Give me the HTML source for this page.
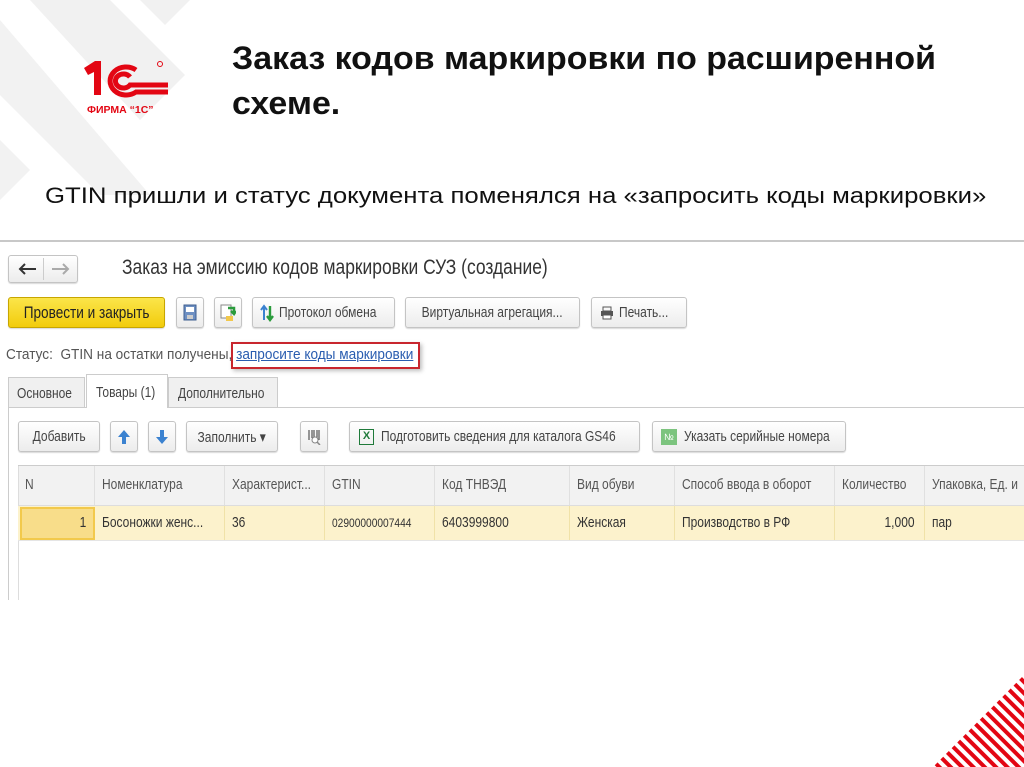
<!DOCTYPE html>
<html><head><meta charset="utf-8">
<style>
*{box-sizing:border-box;margin:0;padding:0}
body{width:1024px;height:767px;position:relative;overflow:hidden;background:#fff;font-family:"Liberation Sans",sans-serif;}
.a{position:absolute}
.n{display:inline-block;transform:scaleX(.8);white-space:nowrap}
.nl{display:inline-block;transform:scaleX(.8);transform-origin:left;white-space:nowrap}
.nr{display:inline-block;transform:scaleX(.8);transform-origin:right;white-space:nowrap}
.btn{position:absolute;border:1px solid #c4c4c4;border-radius:3px;background:linear-gradient(#fff,#ececec);box-shadow:0 1px 1px rgba(0,0,0,.15);font-size:15px;color:#444;display:flex;align-items:center;justify-content:center;white-space:nowrap;overflow:visible}
.th{position:absolute;top:466px;height:39px;border-right:1px solid #e0e0e0;font-size:15px;color:#555;padding:10px 7px;white-space:nowrap;overflow:hidden}
.td{position:absolute;top:506px;height:34px;border-right:1px solid #f0e2a8;font-size:15px;color:#333;padding:8px 7px;white-space:nowrap;overflow:hidden}
.tab{position:absolute;font-size:15px;color:#444;padding:7px 8px;overflow:hidden}
</style></head><body>
<svg class="a" style="left:0;top:0" width="330" height="240">
<polygon points="0,20 0,95 100,195 150,195" fill="#f2f2f2"/>
<polygon points="30,0 110,0 185,75 140,120" fill="#f1f1f1"/>
<polygon points="140,0 190,0 165,25" fill="#f1f1f1"/>
<polygon points="0,140 0,200 30,170" fill="#f2f2f2"/>
</svg>
<svg class="a" style="left:80px;top:58px" width="95" height="65" viewBox="0 0 95 65">
<path d="M4,10 L15,3 L21,3 L21,37 L14,37 L14,14 L8,17 Z" fill="#e30613"/>
<g fill="none" stroke="#e30613" stroke-width="5">
<path d="M56,12 A16,14 0 1 0 56,34 L88,34"/>
<path d="M50,19 A8,7 0 1 0 50,27 L88,27"/>
</g>
<circle cx="80" cy="6" r="2.5" fill="none" stroke="#e30613" stroke-width="1"/>
<text x="7" y="55" font-size="10.5" font-weight="bold" fill="#e30613" font-family="Liberation Sans">ФИРМА “1С”</text>
</svg>
<div class="a" style="left:232px;top:36px;font-size:32px;font-weight:bold;color:#111;line-height:45px;transform:scaleX(1.06);transform-origin:left;white-space:nowrap">Заказ кодов маркировки по расширенной<br>схеме.</div>
<div class="a" style="left:45px;top:183px;font-size:22px;color:#111;transform:scaleX(1.17);transform-origin:left;white-space:nowrap">GTIN пришли и статус документа поменялся на «запросить коды маркировки»</div>

<div class="a" style="left:0;top:240px;width:1024px;height:2px;background:#c8c8c8"></div>
<div class="btn" style="left:8px;top:255px;width:70px;height:28px"></div>
<svg class="a" style="left:8px;top:255px" width="70" height="28"><path d="M28,14H12M17,9L12,14L17,19" stroke="#333" stroke-width="2" fill="none"/><path d="M44,14H60M55,9L60,14L55,19" stroke="#aaa" stroke-width="2" fill="none"/><path d="M35.5,3V25" stroke="#ccc"/></svg>
<div class="a" style="left:122px;top:256px;font-size:21px;color:#333"><span class="nl" style="transform:scaleX(.83)">Заказ на эмиссию кодов маркировки СУЗ (создание)</span></div>

<div class="btn" style="left:8px;top:297px;width:157px;height:31px;background:linear-gradient(#fbe54a,#f2cc0c);border-color:#c7a600;color:#222;font-size:17px"><span class="n">Провести и закрыть</span></div>
<div class="btn" style="left:176px;top:297px;width:28px;height:31px"><svg width="14" height="17"><rect x="1" y="1" width="12" height="15" fill="#6d8fc2" stroke="#3f5f90"/><rect x="3" y="3" width="8" height="5" fill="#fff"/><rect x="4" y="11" width="6" height="4" fill="#ccc"/></svg></div>
<div class="btn" style="left:214px;top:297px;width:28px;height:31px"><svg width="16" height="18"><rect x="1" y="1" width="10" height="13" fill="#fff" stroke="#888"/><path d="M8,4 L14,4 L14,9 M11,7 L14,10 L16,7" stroke="#2a9b3c" stroke-width="2.5" fill="none"/><rect x="6" y="12" width="7" height="5" fill="#f2c84b"/></svg></div>
<div class="btn" style="left:252px;top:297px;width:143px;height:31px;justify-content:flex-start;padding-left:6px"><svg width="16" height="18" style="flex:none"><path d="M5,16V3M2,6L5,2L8,6" stroke="#3b82d0" stroke-width="2" fill="none"/><path d="M11,2V15M8,12L11,16L14,12" stroke="#2a9b3c" stroke-width="2.4" fill="none"/></svg><span class="nl" style="margin-left:4px">Протокол обмена</span></div>
<div class="btn" style="left:405px;top:297px;width:175px;height:31px"><span class="n">Виртуальная агрегация...</span></div>
<div class="btn" style="left:591px;top:297px;width:96px;height:31px;justify-content:flex-start;padding-left:8px"><svg width="14" height="14" style="flex:none"><rect x="3" y="1" width="8" height="4" fill="none" stroke="#555"/><rect x="1" y="5" width="12" height="5" fill="#555"/><rect x="3" y="9" width="8" height="4" fill="#fff" stroke="#555"/></svg><span class="nl" style="margin-left:5px">Печать...</span></div>

<div class="a" style="left:6px;top:347px;font-size:14.5px;color:#555"><span class="nl" style="transform:scaleX(.94)">Статус:&nbsp; GTIN на остатки получены, <span style="color:#2a5db0;text-decoration:underline">запросите коды маркировки</span></span></div>
<div class="a" style="left:231px;top:342px;width:189px;height:27px;border:2px solid #c8262e;box-shadow:2px 2px 4px rgba(0,0,0,.25)"></div>

<div class="tab" style="left:8px;top:377px;width:77px;height:31px;background:#f0f0f0;border:1px solid #ccc"><span class="nl">Основное</span></div>
<div class="tab" style="left:86px;top:374px;width:82px;height:34px;background:#fff;border:1px solid #ccc;border-bottom:none;padding:9px 9px"><span class="nl">Товары (1)</span></div>
<div class="tab" style="left:168px;top:377px;width:110px;height:31px;background:#f0f0f0;border:1px solid #ccc;padding:7px 9px"><span class="nl">Дополнительно</span></div>
<div class="a" style="left:8px;top:407px;width:1016px;height:1px;background:#ccc"></div>
<div class="a" style="left:87px;top:407px;width:80px;height:1px;background:#fff"></div>
<div class="a" style="left:8px;top:407px;width:1px;height:193px;background:#ccc"></div>

<div class="btn" style="left:18px;top:421px;width:82px;height:31px"><span class="n">Добавить</span></div>
<div class="btn" style="left:110px;top:421px;width:28px;height:31px"><svg width="14" height="16"><path d="M7,1L13,8H9V15H5V8H1Z" fill="#3b82d0"/></svg></div>
<div class="btn" style="left:148px;top:421px;width:28px;height:31px"><svg width="14" height="16"><path d="M7,15L13,8H9V1H5V8H1Z" fill="#3b82d0"/></svg></div>
<div class="btn" style="left:186px;top:421px;width:92px;height:31px"><span class="n">Заполнить ▾</span></div>
<div class="btn" style="left:300px;top:421px;width:28px;height:31px"><svg width="14" height="16"><path d="M2,1V11M5,1V9M7,1V9M10,1V9M12,1V11" stroke="#555" stroke-width="1.2"/><circle cx="8" cy="11" r="3" fill="#fff" stroke="#888"/><path d="M10,13L13,16" stroke="#888" stroke-width="1.5"/></svg></div>
<div class="btn" style="left:349px;top:421px;width:291px;height:31px;justify-content:flex-start;padding-left:9px"><span style="display:inline-block;width:15px;height:16px;border:1.5px solid #1f7a3a;color:#1f7a3a;font-size:11px;font-weight:bold;line-height:13px;text-align:center;flex:none">X</span><span class="nl" style="margin-left:7px">Подготовить сведения для каталога GS46</span></div>
<div class="btn" style="left:652px;top:421px;width:194px;height:31px;justify-content:flex-start;padding-left:8px"><span style="display:inline-block;width:16px;height:16px;background:#7cc47e;color:#fff;font-size:9px;line-height:16px;text-align:center;flex:none">№</span><span class="nl" style="margin-left:7px">Указать серийные номера</span></div>

<div class="a" style="left:18px;top:465px;width:1006px;height:1px;background:#ccc"></div>
<div class="a" style="left:18px;top:466px;width:1006px;height:40px;background:#f2f2f2;border-bottom:1px solid #ddd"></div>
<div class="a" style="left:18px;top:466px;width:1px;height:134px;background:#ddd"></div>
<div class="th" style="left:18px;width:77px"><span class="nl">N</span></div>
<div class="th" style="left:95px;width:130px"><span class="nl">Номенклатура</span></div>
<div class="th" style="left:225px;width:100px"><span class="nl">Характерист...</span></div>
<div class="th" style="left:325px;width:110px"><span class="nl">GTIN</span></div>
<div class="th" style="left:435px;width:135px"><span class="nl">Код ТНВЭД</span></div>
<div class="th" style="left:570px;width:105px"><span class="nl">Вид обуви</span></div>
<div class="th" style="left:675px;width:160px"><span class="nl">Способ ввода в оборот</span></div>
<div class="th" style="left:835px;width:90px"><span class="nl">Количество</span></div>
<div class="th" style="left:925px;width:99px;border-right:none"><span class="nl">Упаковка, Ед. и</span></div>

<div class="a" style="left:18px;top:506px;width:1006px;height:35px;background:#fcf2cc;border-bottom:1px solid #e5e5e5"></div>
<div class="a" style="left:20px;top:507px;width:75px;height:33px;background:#f8dd8a;border:2px solid #f2c94c"></div>
<div class="td" style="left:18px;width:77px;text-align:right;border:none;padding-right:9px"><span class="nr">1</span></div>
<div class="td" style="left:95px;width:130px"><span class="nl">Босоножки женс...</span></div>
<div class="td" style="left:225px;width:100px"><span class="nl">36</span></div>
<div class="td" style="left:325px;width:110px;font-size:12px;padding-top:10px"><span class="nl" style="transform:scaleX(.85)">02900000007444</span></div>
<div class="td" style="left:435px;width:135px"><span class="nl">6403999800</span></div>
<div class="td" style="left:570px;width:105px"><span class="nl">Женская</span></div>
<div class="td" style="left:675px;width:160px"><span class="nl">Производство в РФ</span></div>
<div class="td" style="left:835px;width:90px;text-align:right;padding-right:9px"><span class="nr">1,000</span></div>
<div class="td" style="left:925px;width:99px;border:none"><span class="nl">пар</span></div>

<svg class="a" style="left:930px;top:670px" width="94" height="97">
<defs><clipPath id="c"><polygon points="3,97 94,5 94,97"/></clipPath>
<pattern id="p" width="8" height="8" patternUnits="userSpaceOnUse" patternTransform="rotate(-45)"><rect width="4" height="8" fill="#e30613"/></pattern></defs>
<rect width="94" height="97" fill="url(#p)" clip-path="url(#c)"/>
</svg>
</body></html>
